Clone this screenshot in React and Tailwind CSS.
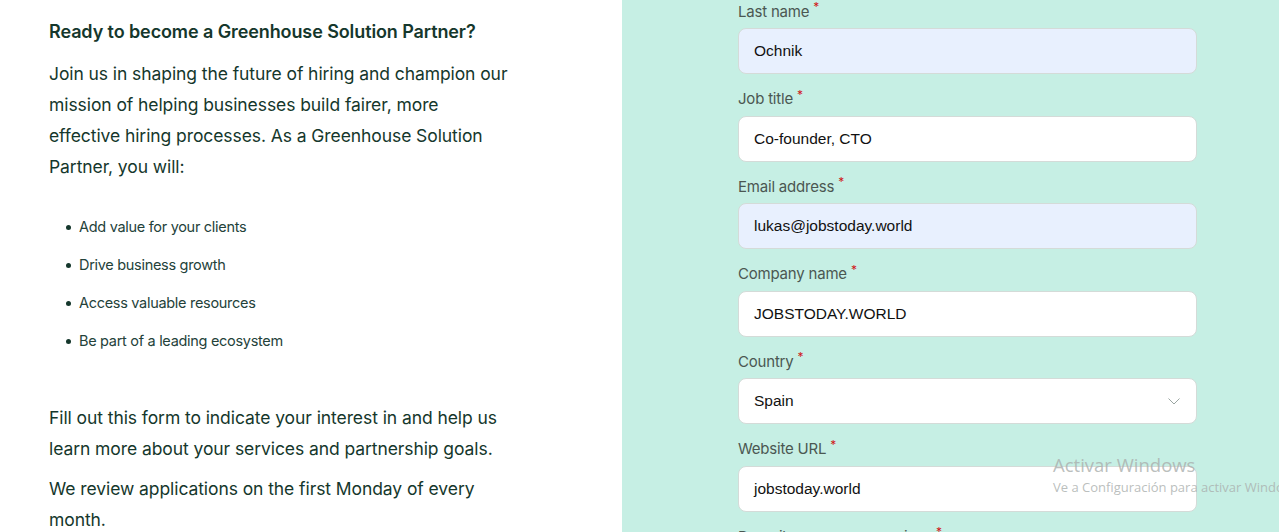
import React from 'react';

const fields = [
  { label: 'Last name', value: 'Ochnik', autofill: true },
  { label: 'Job title', value: 'Co-founder, CTO' },
  { label: 'Email address', value: 'lukas@jobstoday.world', autofill: true },
  { label: 'Company name', value: 'JOBSTODAY.WORLD' },
  { label: 'Country', value: 'Spain', select: true },
  { label: 'Website URL', value: 'jobstoday.world' },
  { label: 'Describe your core services', value: '' },
];

const bullets = [
  'Add value for your clients',
  'Drive business growth',
  'Access valuable resources',
  'Be part of a leading ecosystem',
];

const Field = ({ field }) => (
  <div className="mb-[15.5px]">
    <label className="flex h-[20px] items-center text-[15px] text-[#4b5752] tracking-[-0.2px]">
      {field.label}
      <span className="ml-[4px] -mt-[10px] text-[12px] text-[#d0181a]">*</span>
    </label>
    <div
      className={`mt-[6px] flex h-[46px] w-[459px] items-center justify-between rounded-[8px] border border-[#d4dbd8] px-[15px] text-[15.5px] text-[#111] font-['Liberation_Sans',sans-serif] ${
        field.autofill ? 'bg-[#e8f0fe]' : 'bg-white'
      }`}
    >
      <span>{field.value}</span>
      {field.select && (
        <svg width="12" height="7" viewBox="0 0 12 7" fill="none" className="mr-[1px]">
          <path d="M0.5 0.5 L6 6 L11.5 0.5" stroke="#9aa5a1" strokeWidth="1" />
        </svg>
      )}
    </div>
  </div>
);

export default function App() {
  return (
    <div className="relative flex h-[532px] w-[1279px] overflow-hidden bg-white font-['Inter',sans-serif]">
      {/* Left copy */}
      <div className="w-[622px] shrink-0 pl-[49px] pt-[20px] text-[#15372c]">
        <h2 className="text-[18px] font-semibold leading-[24px] tracking-[-0.1px]">
          Ready to become a Greenhouse Solution Partner?
        </h2>
        <p className="mt-[14px] w-[462px] text-[17.5px] leading-[31px] tracking-[-0.08px]">
          Join us in shaping the future of hiring and champion our mission of helping businesses build fairer, more
          effective hiring processes. As a Greenhouse Solution Partner, you will:
        </p>
        <ul className="mt-[34px] flex flex-col gap-[16px] pl-[30px] text-[14.5px] leading-[22px] tracking-[-0.3px] text-[#24423a]">
          {bullets.map((b) => (
            <li key={b} className="relative">
              <span className="absolute -left-[13px] top-[9px] h-[5px] w-[5px] rounded-full bg-[#15372c]" />
              {b}
            </li>
          ))}
        </ul>
        <p className="mt-[50px] w-[470px] text-[17.5px] leading-[31px] tracking-[-0.08px]">
          Fill out this form to indicate your interest in and help us learn more about your services and partnership goals.
        </p>
        <p className="mt-[9px] w-[440px] text-[17.5px] leading-[31px] tracking-[-0.08px]">
          We review applications on the first Monday of every month.
        </p>
      </div>

      {/* Right form */}
      <div className="flex-1 bg-[#c6efe4] pl-[116px] pt-[2px]">
        {fields.map((f) => (
          <Field key={f.label} field={f} />
        ))}
      </div>

      {/* Windows activation watermark */}
      <div className="pointer-events-none absolute left-[1053px] top-[453px] whitespace-nowrap font-['Open_Sans',sans-serif] text-[#a9aeac]/80">
        <div className="text-[18.5px] leading-[24px]">Activar Windows</div>
        <div className="mt-[1px] text-[13px] leading-[18px]">Ve a Configuración para activar Windows.</div>
      </div>
    </div>
  );
}
